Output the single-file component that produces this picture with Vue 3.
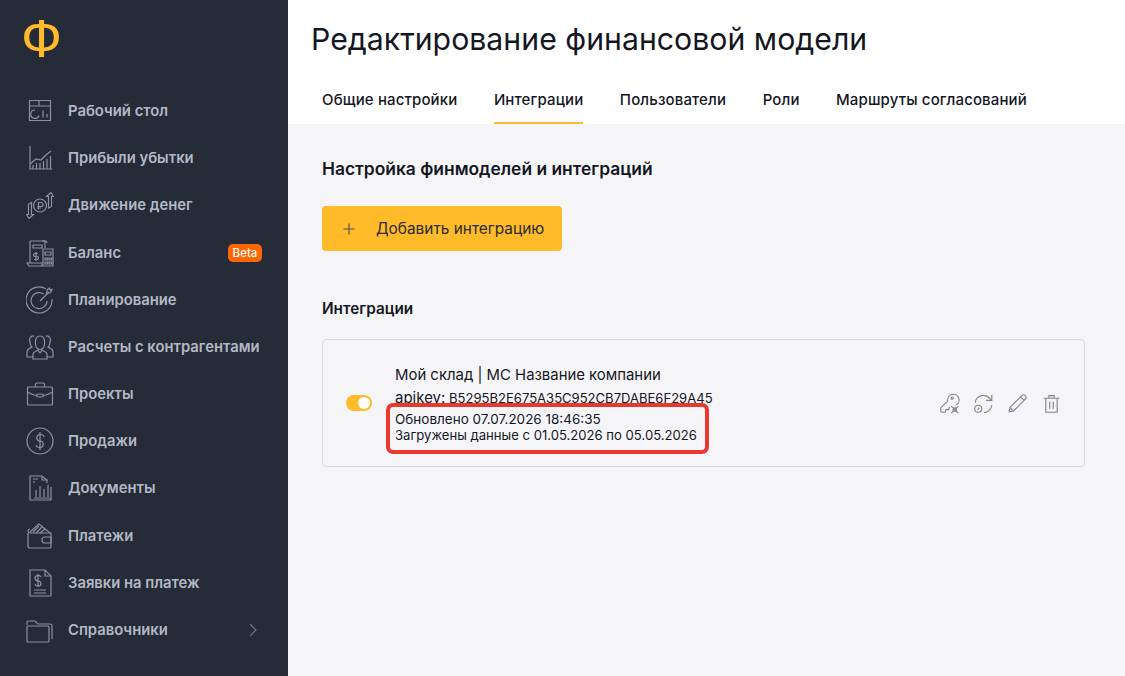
<template>
  <div class="page">
    <aside class="sidebar">
      <div class="logo">Ф</div>
      <nav class="nav">
        <a v-for="item in menu" :key="item.label" class="nav-item">
          <svg class="nav-icon" viewBox="0 0 28 28" fill="none">
            <path v-for="d in item.icon" :key="d" :d="d" />
          </svg>
          <span class="nav-label">{{ item.label }}</span>
          <span v-if="item.beta" class="beta">Beta</span>
          <svg v-if="item.more" class="chevron" viewBox="0 0 8 14" fill="none">
            <path d="M1 1l6 6-6 6" />
          </svg>
        </a>
      </nav>
    </aside>

    <main class="main">
      <header class="head">
        <h1 class="title">Редактирование финансовой модели</h1>
        <div class="tabs">
          <a v-for="tab in tabs" :key="tab" class="tab" :class="{ active: tab === 'Интеграции' }">{{ tab }}</a>
        </div>
      </header>

      <section class="content">
        <h2 class="section-title">Настройка финмоделей и интеграций</h2>
        <button class="add-btn" type="button">
          <svg class="plus" viewBox="0 0 12 12" fill="none"><path d="M6 0.5v11M0.5 6h11" /></svg>
          <span>Добавить интеграцию</span>
        </button>
        <h3 class="sub-title">Интеграции</h3>

        <div class="card">
          <span class="switch"><span class="knob"></span></span>
          <div class="info">
            <div class="name">Мой склад | МС Название компании</div>
            <div class="key"><span class="key-label">apikey:</span> B5295B2E675A35C952CB7DABE6F29A45</div>
            <div class="meta first">Обновлено 07.07.2026 18:46:35</div>
            <div class="meta">Загружены данные с 01.05.2026 по 05.05.2026</div>
            <span class="mark"></span>
          </div>
          <div class="actions">
            <svg v-for="(icon, i) in actions" :key="i" class="action" viewBox="0 0 24 24" fill="none">
              <path v-for="d in icon" :key="d" :d="d" />
            </svg>
          </div>
        </div>
      </section>
    </main>
  </div>
</template>

<script setup>
const circle = (cx, cy, r) => `M${cx - r} ${cy}a${r} ${r} 0 1 0 ${2 * r} 0a${r} ${r} 0 1 0 ${-2 * r} 0`;

const menu = [
  {
    label: "Рабочий стол",
    icon: ["M3.500 3.500h21v20h-21z", "M3.500 9h21M13 3.500V9", "M9 13a4.200 4.200 0 1 0 4 5.500", "M17 13.500v7M21 17v3.500"],
  },
  {
    label: "Прибыли убытки",
    icon: ["M4 2v23h22", "M4 20l6-5 5 1 5-5 5-4", "M7 25v-4M10.500 25v-6M14 25v-6M17.500 25v-8M21 25v-10M24.500 25v-13"],
  },
  {
    label: "Движение денег",
    icon: [circle(14, 14.500, 6.500), "M12.500 18.500v-7h2.500a2 2 0 0 1 0 4h-3.500M11.500 17h3.500", "M3 27.500l-2.500-4H2.500V13l3-1.500v12H7.500z", "M25 1.500l2.500 4H25.500v10l-3 1.500V5.500h-2z"],
  },
  {
    label: "Баланс",
    beta: true,
    icon: ["M4 24V3a1 1 0 0 1 1-1h14v7", "M16 2h3a2 2 0 0 1 2 2", "M1 24h15v3H3z", "M7 6h9v3H7z", "M17 10h10v17H17z", "M19 13h6v3h-6zM19 19h2.500v2H19zM23 19h2.500v2H23zM19 23h2.500v2H19zM23 23h2.500v2H23z", "M10 13v9M12 14.500H9a1.500 1.500 0 0 0 0 3h2a1.500 1.500 0 0 1 0 3H8"],
  },
  {
    label: "Планирование",
    icon: ["M20 3A13 13 0 1 0 26 13", "M17.500 8A8 8 0 1 0 21 15", "M14 15l9-9", "M20.500 7.500l1-4 2-1.500 .5 2 2-.5-1.500 3-4 1z"],
  },
  {
    label: "Расчеты с контрагентами",
    icon: ["M9.500 11a4.500 5.500 0 1 0 9 0V8a4.500 5 0 1 0-9 0z", "M8 3A4 4 0 0 0 4 9c0 2 1 4 2 5-2 1-5 2-5 5v5h6", "M20 3a4 4 0 0 1 4 6c0 2-1 4-2 5 2 1 5 2 5 5v5h-6", "M7 26v-5c0-2 4-3 5-4l2 3 2-3c1 1 5 2 5 4v5z"],
  },
  {
    label: "Проекты",
    icon: ["M1.500 8a1 1 0 0 1 1-1h23a1 1 0 0 1 1 1v16a1 1 0 0 1-1 1h-23a1 1 0 0 1-1-1z", "M9.500 7V4a1 1 0 0 1 1-1h7a1 1 0 0 1 1 1v3", "M1.500 12c3 2 6 3 9 3.500M26.500 12c-3 2-6 3-9 3.500", "M10.500 15.500a3.500 1.500 0 0 0 7 0a3.500 1.500 0 0 0-7 0"],
  },
  {
    label: "Продажи",
    icon: [circle(14, 14, 13), "M18 10a3.500 3 0 0 0-3.500-2.500h-1a3.300 3.300 0 0 0 0 6.500h1a3.300 3.300 0 0 1 0 6.500h-1A3.500 3 0 0 1 10 18", "M14 5v18"],
  },
  {
    label: "Документы",
    icon: ["M21 6l-5-4H4v24h21v-2", "M16 2v4h5v3", "M7 5h5M7 8h2", "M10 23v-7M14 23V12M18 23v-8M22 23V11M25 23v-10M8 24h18"],
  },
  {
    label: "Платежи",
    icon: ["M2 11v13a2 2 0 0 0 2 2h20a1 1 0 0 0 1-1V11H4a2 2 0 0 1-2-2a2 2 0 0 1 2-2", "M19 15h6v6h-6a3 3 0 0 1 0-6z", "M4 10l9-8 11 9", "M7 10l6-6M10 11l6-6M14 11l5-4"],
  },
  {
    label: "Заявки на платеж",
    icon: ["M4 1h15l6 6v20H4z", "M19 1v6h6", "M12 5v13M15 8a3 3 0 0 0-3-1.500c-4 0-4 5 0 5.500s4 5 0 5a3 3 0 0 1-3-2", "M8 21h12M8 24h12"],
  },
  {
    label: "Справочники",
    more: true,
    icon: ["M1 9V6a1 1 0 0 1 1-1h7l3 3h12a2 2 0 0 1 2 2v13", "M1 11a1 1 0 0 1 1-1h20a1 1 0 0 1 1 1v14a1 1 0 0 1-1 1H2a1 1 0 0 1-1-1z"],
  },
];

const tabs = ["Общие настройки", "Интеграции", "Пользователи", "Роли", "Маршруты согласований"];

const actions = [
  [
    "M3 22l-1-1v-4l8-8a6.500 6.500 0 1 1 9 5",
    "M3 22h4l1-3h3l1-3",
    circle(15, 6, 1.200),
    "M14 15l8 8M22 15l-8 8",
    circle(18, 19, 2),
  ],
  [
    "M2.500 11a9.500 9.500 0 0 1 16.500-5l2 2.500",
    "M21.500 2v6.500H15",
    "M21.500 14a9.500 9.500 0 0 1-9 8.500",
    circle(6, 18, 4),
    "M5.500 19.500l1.500-3",
  ],
  ["M2.500 21.500l1-5L17 3a2.500 2.500 0 0 1 4 4L7.500 20.500z", "M15.500 4.500l4 4M3.500 16.500l4 4"],
  ["M3 6h18M9 6V3h6v3", "M5.500 6v16h13V6", "M10 10v8M14 10v8"],
];
</script>

<style scoped>
.page {
  display: flex;
  width: 1125px;
  height: 676px;
  overflow: hidden;
  font-family: Inter, sans-serif;
  color: #14171f;
}

.sidebar {
  flex: none;
  width: 288px;
  background: #262b38;
  color: #b3b8c6;
}

.logo {
  height: 87.400px;
  padding-left: 21px;
  font-family: "Liberation Sans", sans-serif;
  font-size: 54px;
  line-height: 76px;
  color: #ffbb29;
}

.nav {
  display: flex;
  flex-direction: column;
  padding-left: 26px;
  padding-right: 26px;
}

.nav-item {
  display: flex;
  align-items: center;
  height: 47.200px;
  font-size: 14.800px;
  font-weight: 600;
}

.nav-icon {
  flex: none;
  width: 28px;
  height: 28px;
  margin-right: 14px;
  stroke: #8d919e;
  stroke-width: 1.200;
}

.nav-label {
  flex: 1;
  white-space: nowrap;
}

.beta {
  width: 34px;
  height: 18px;
  background: #ff6600;
  border-radius: 5px;
  color: #fff;
  font-size: 11.500px;
  font-weight: 500;
  line-height: 18px;
  text-align: center;
}

.chevron {
  width: 8px;
  height: 14px;
  margin-right: 5px;
  stroke: #6f7482;
  stroke-width: 1.200;
}

.main {
  flex: 1;
  display: flex;
  flex-direction: column;
  background: #f5f5f8;
}

.head {
  height: 124px;
  background: #fff;
}

.title {
  margin: 0;
  padding: 18px 0 0 23px;
  font-size: 30.250px;
  font-weight: 400;
  line-height: 42px;
}

.tabs {
  display: flex;
  gap: 36.500px;
  margin-top: 14px;
  padding-left: 34px;
}

.tab {
  height: 50px;
  box-sizing: border-box;
  padding-top: 16px;
  font-size: 15px;
  font-weight: 500;
  letter-spacing: 0.130px;
  line-height: 20px;
  white-space: nowrap;
}

.tab.active {
  border-bottom: 2px solid #ffbb29;
}

.content {
  display: flex;
  flex-direction: column;
  align-items: flex-start;
  padding: 33px 40px 0 34px;
}

.section-title {
  margin: 0;
  font-size: 17.400px;
  font-weight: 600;
  line-height: 24px;
}

.add-btn {
  display: flex;
  align-items: center;
  width: 240px;
  height: 45px;
  margin-top: 25px;
  padding: 0 0 0 21px;
  background: #ffbb29;
  border: 0;
  border-radius: 4px;
  color: #2a2a2a;
  font-family: inherit;
  font-size: 15.400px;
}

.plus {
  width: 12px;
  height: 12px;
  margin-right: 21px;
  stroke: #555;
  stroke-width: 1.200;
}

.sub-title {
  margin: 48px 0 0;
  font-size: 15.300px;
  font-weight: 600;
  line-height: 20px;
}

.card {
  display: flex;
  align-items: center;
  width: 763px;
  height: 128px;
  box-sizing: border-box;
  margin-top: 20px;
  padding: 0 24px 0 23px;
  border: 1px solid #d5d8e2;
  border-radius: 4px;
}

.switch {
  flex: none;
  display: flex;
  justify-content: flex-end;
  align-items: center;
  width: 26px;
  height: 16px;
  margin-right: 23px;
  padding-right: 2px;
  box-sizing: border-box;
  background: #ffbb29;
  border-radius: 8px;
}

.knob {
  width: 12px;
  height: 12px;
  background: #fff;
  border-radius: 50%;
}

.info {
  position: relative;
  flex: 1;
  padding-top: 1px;
  font-size: 14.900px;
}

.name {
  line-height: 22px;
}

.key {
  margin-top: 1px;
  line-height: 22px;
  font-size: 13.050px;
}

.key-label {
  font-size: 15px;
}

.meta {
  font-size: 13.100px;
  line-height: 16px;
}

.meta.first {
  margin-top: 2px;
  font-size: 13.500px;
}

.mark {
  position: absolute;
  left: -9px;
  top: 40px;
  width: 323px;
  height: 51px;
  box-sizing: border-box;
  border: 4px solid #e8392f;
  border-radius: 7px;
}

.actions {
  display: flex;
  gap: 13px;
  margin-right: -2px;
}

.action {
  width: 21px;
  height: 21px;
  stroke: #80848f;
  stroke-width: 1.300;
}
</style>

<style>
body {
  background: #fff;
}
</style>
